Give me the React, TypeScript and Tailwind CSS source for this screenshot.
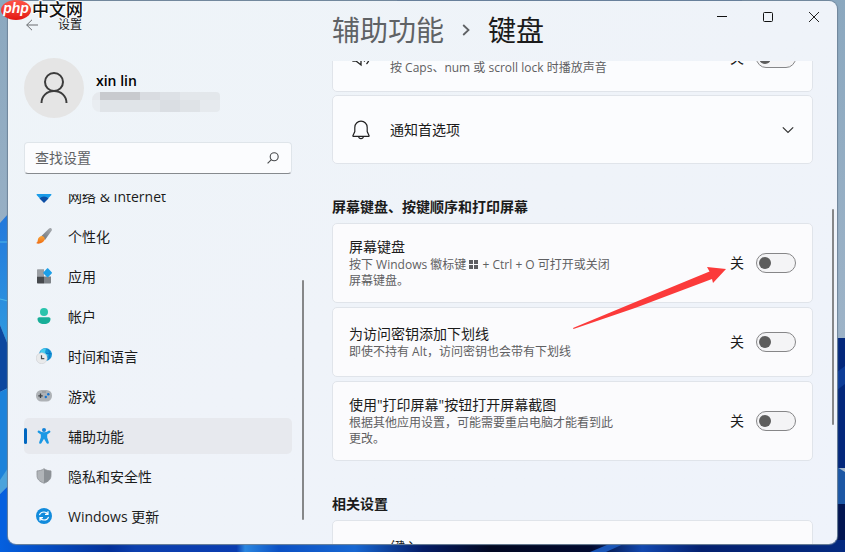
import { useState } from "react";
import type { ReactNode } from "react";

interface NavItem {
  id: string;
  label: string;
  icon: ReactNode;
}

interface ToggleProps {
  label: string;
}

interface OptionCardProps {
  title: string;
  description: ReactNode;
  children?: ReactNode;
}

const navItems: NavItem[] = [
  { id: "network", label: "网络 & Internet", icon: <NetworkIcon /> },
  { id: "personalization", label: "个性化", icon: <BrushIcon /> },
  { id: "apps", label: "应用", icon: <AppsIcon /> },
  { id: "accounts", label: "帐户", icon: <AccountIcon /> },
  { id: "time", label: "时间和语言", icon: <TimeIcon /> },
  { id: "gaming", label: "游戏", icon: <GameIcon /> },
  { id: "accessibility", label: "辅助功能", icon: <AccessibilityIcon /> },
  { id: "privacy", label: "隐私和安全性", icon: <ShieldIcon /> },
  { id: "update", label: "Windows 更新", icon: <UpdateIcon /> },
];

function NetworkIcon() {
  return (
    <svg viewBox="0 0 16 16" className="size-4">
      <path d="M0 5.5a11.5 11.5 0 0 1 16 0L12.8 9H3.2z" fill="#35c1f1" />
      <path d="M.4 6.800a10.800 10.800 0 0 1 15.200 0L11.600 11H4.400z" fill="#1b9be8" />
      <path d="M3.500 10.400a6.400 6.400 0 0 1 9 0L8 15z" fill="#0d4fa5" />
    </svg>
  );
}

function BrushIcon() {
  return (
    <svg viewBox="0 0 16 16" className="size-4">
      <defs>
        <linearGradient id="handle" x1="0" y1="1" x2="1" y2="0">
          <stop offset="0" stopColor="#6d7277" />
          <stop offset="1" stopColor="#a9adb2" />
        </linearGradient>
        <linearGradient id="tip" x1="0" y1="0" x2="0" y2="1">
          <stop offset="0" stopColor="#f9a53a" />
          <stop offset="1" stopColor="#ee6c12" />
        </linearGradient>
      </defs>
      <path d="M5.200 8.200 12.800.7c.8-.8 1.900-.9 2.600-.2.700.7.700 1.600 0 2.500L9 12z" fill="url(#handle)" />
      <path d="M4.600 8.300c1.100-.6 2.200-.3 3.100.5 1 .9 1.400 2 .8 3.300-.8 1.800-2.700 3.200-5 3.500-1.300.2-2.400 0-3.400-.5 1.300-.5 1.500-1.500 1.700-3 .2-1.800 1.200-3 2.800-3.800z" fill="url(#tip)" />
    </svg>
  );
}

function AppsIcon() {
  return (
    <svg viewBox="0 0 16 16" className="size-4">
      <path d="M1 2c0-.5.300-.700.700-.700H8V8.500H1z" fill="#9a9ea3" />
      <path d="M1 8.500h7V15.500H1.700c-.4 0-.7-.3-.7-.7z" fill="#46494d" />
      <path d="M8 8.500h7v6.300c0 .4-.3.700-.7.700H8z" fill="#7e8388" />
      <path d="M11 .6c.4-.4.8-.4 1.200 0l3.500 3.600c.4.4.4.800 0 1.200l-3.500 3.600c-.4.4-.8.4-1.200 0L7.500 5.400c-.4-.4-.4-.8 0-1.200z" fill="#1c9fe8" />
    </svg>
  );
}

function AccountIcon() {
  return (
    <svg viewBox="0 0 16 16" className="size-4">
      <circle cx="8" cy="4" r="4" fill="#29c4ac" />
      <path d="M1.500 11c0-1 .700-1.800 1.800-1.800h9.400c1.100 0 1.800.8 1.800 1.800 0 3-2.500 5-6.500 5s-6.500-2-6.500-5z" fill="#17ae98" />
    </svg>
  );
}

function TimeIcon() {
  return (
    <svg viewBox="0 0 16 16" className="size-4">
      <circle cx="9.500" cy="6.500" r="6.500" fill="#1795d6" />
      <path d="M4.500 3C6 1 8 .2 10 .2l-1 4.300 3 2.500-2 3-6-3z" fill="#48cdee" />
      <path d="M12 1.500c2 2.500 2.500 6.500.5 10M10 5.500h5.500" stroke="#0c78c6" strokeWidth="1" fill="none" />
      <circle cx="5.700" cy="10.200" r="5.500" fill="#e9eaeb" stroke="#c6c9cc" strokeWidth=".5" />
      <path d="M5.500 7.200v3.500h2.800" stroke="#4b4e52" strokeWidth="1.200" fill="none" />
    </svg>
  );
}

function GameIcon() {
  return (
    <svg viewBox="0 0 16 16" className="size-4">
      <rect x="0" y="2" width="16" height="11.500" rx="5.500" fill="#aeb2b6" />
      <path d="M2.300 7.800h4.400M4.500 5.600V10" stroke="#3f4347" strokeWidth="1.300" />
      <circle cx="12.300" cy="6.200" r="1.200" fill="#1673cf" />
      <circle cx="9.800" cy="9" r="1.200" fill="#1673cf" />
      <path d="M6.500 4h3" stroke="#666b70" strokeWidth="1" strokeDasharray="1 1" />
    </svg>
  );
}

function AccessibilityIcon() {
  return (
    <svg viewBox="0 0 16 16" className="size-4">
      <circle cx="8" cy="2" r="2" fill="#1583d8" />
      <path
        d="M1.700 3.200c.3-.7 1-.9 1.700-.5C6.500 4.800 9.500 4.800 12.600 2.700c.7-.4 1.400-.2 1.700.5.3.6 0 1.200-.6 1.600L11.200 6.400v3l1.600 4.800c.2.700-.1 1.300-.7 1.500-.7.2-1.300 0-1.600-.7L8 10.800 5.500 15c-.3.700-.9.9-1.600.7-.6-.2-.9-.8-.7-1.500l1.600-4.800v-3L2.300 4.800c-.6-.4-.9-1-.6-1.600z"
        fill="#1998e5"
      />
    </svg>
  );
}

function ShieldIcon() {
  return (
    <svg viewBox="0 0 16 16" className="size-4">
      <path d="M8 .7c2 1.500 4.300 2.100 7 2.200v4.600c0 3.700-2.600 6.200-7 7.700z" fill="#8b9095" />
      <path d="M8 .7C6 2.200 3.700 2.800 1 2.900v4.600c0 3.700 2.600 6.200 7 7.700z" fill="#b0b4b8" />
      <path d="M8 .7c2 1.500 4.300 2.100 7 2.200v4.600c0 3.700-2.600 6.200-7 7.700-4.400-1.500-7-4-7-7.700V2.900C3.700 2.800 6 2.200 8 .7z" fill="none" stroke="#8d9196" strokeWidth=".8" />
    </svg>
  );
}

function UpdateIcon() {
  return (
    <svg viewBox="0 0 16 16" className="size-4">
      <circle cx="8" cy="8" r="8" fill="#128bdc" />
      <path
        d="M3.500 7.200C4 5.200 5.700 4 8 4c1.600 0 2.900.7 3.700 1.900M12 3.300v3H9M12.500 8.800C12 10.800 10.300 12 8 12c-1.600 0-2.900-.7-3.700-1.900M4 12.700v-3h3"
        stroke="#fff"
        strokeWidth="1.200"
        fill="none"
      />
    </svg>
  );
}

function WindowsKey() {
  return (
    <svg viewBox="0 0 9 9" className="mr-px inline size-[9px] align-baseline" fill="#5d5d60" aria-label="Windows">
      <path d="M0 0h4v4H0zM5 0h4v4H5zM0 5h4v4H0zM5 5h4v4H5z" />
    </svg>
  );
}

// Desktop bloom that shows round the window edges
function Wallpaper() {
  return (
    <svg viewBox="0 0 845 552" preserveAspectRatio="none" className="absolute inset-0 -z-10 h-full w-full">
      <defs>
        <linearGradient id="sky" x1="0" y1="0" x2="0" y2="1">
          <stop offset="0" stopColor="#8ba8bf" />
          <stop offset="1" stopColor="#a9bacd" />
        </linearGradient>
        <linearGradient id="petal" x1="0" y1="0" x2="0" y2="1">
          <stop offset="0" stopColor="#2378dc" />
          <stop offset="1" stopColor="#2f9ae0" />
        </linearGradient>
        <linearGradient id="floor" x1="0" y1="0" x2="1" y2="0">
          <stop offset="0" stopColor="#0560df" />
          <stop offset=".13" stopColor="#03309a" />
          <stop offset=".16" stopColor="#0c3fae" />
          <stop offset=".28" stopColor="#0a3cb0" />
          <stop offset=".29" stopColor="#2a86e0" />
          <stop offset=".33" stopColor="#0b50c4" />
          <stop offset=".42" stopColor="#1767d2" />
          <stop offset=".5" stopColor="#051c66" />
          <stop offset=".58" stopColor="#020822" />
          <stop offset=".7" stopColor="#020a30" />
          <stop offset=".76" stopColor="#1248b0" />
          <stop offset=".83" stopColor="#04206f" />
          <stop offset="1" stopColor="#042a80" />
        </linearGradient>
      </defs>
      <rect width="845" height="552" fill="url(#sky)" />
      <path d="M397 0h345v4H397z" fill="#2d5fb0" />
      <path d="M0 223 8 214V345L0 325z" fill="url(#petal)" />
      <path d="M0 325 8 345V388L0 392z" fill="#0c479f" />
      <path d="M0 392 8 388V480H0z" fill="#1c82da" />
      <path d="M0 480 8 468V486L0 494z" fill="#4aa3dc" />
      <path d="M0 494 8 486V552H0z" fill="#0560df" />
      <path d="M0 299 8 301M0 242H8" stroke="#4fb9e8" strokeWidth="1" />
      <path d="M837 338h8v130h-8z" fill="#04287c" />
      <path d="M837 372 845 366V384L837 390z" fill="#0e3d98" />
      <path d="M837 467 845 472V504H837z" fill="#1d57a5" />
      <path d="M837 504h8v48h-8z" fill="#021552" />
      <path d="M0 540h845v12H0z" fill="url(#floor)" />
      <path d="M590 552l24-10h14l-22 10z" fill="#1a56b8" />
    </svg>
  );
}

function Watermark() {
  return (
    <div className="absolute top-0 left-px z-20 flex h-5 items-center gap-px">
      <span className="flex h-5 w-[30px] items-center justify-center rounded-[50%] bg-linear-to-b from-[#ff5348] to-[#e3120f] pb-1 font-['Liberation_Sans',sans-serif] text-[14px] leading-5 font-bold text-white italic">
        php
      </span>
      <span className="text-[17px] leading-5 font-medium text-[#111] [paint-order:stroke_fill] [-webkit-text-stroke:2px_white]">
        中文网
      </span>
    </div>
  );
}

function Toggle({ label }: ToggleProps) {
  const [on, setOn] = useState(false);

  return (
    <label className="flex shrink-0 items-center gap-3 text-[14px] leading-5">
      <span>{on ? "开" : "关"}</span>
      <input
        type="checkbox"
        role="switch"
        aria-label={label}
        checked={on}
        onChange={(e) => setOn(e.target.checked)}
        className="flex h-5 w-10 appearance-none items-center rounded-full border border-[#868688] bg-[#f4f4f6] px-[2px] before:size-3 before:rounded-full before:bg-[#5d5d5d] checked:justify-end checked:bg-[#0067c0] checked:before:bg-white"
      />
    </label>
  );
}

function OptionCard({ title, description, children }: OptionCardProps) {
  return (
    <div className="relative flex min-h-[70px] items-center justify-between rounded-[5px] border border-[#e0e4ea] bg-[#fbfbfd] px-4 py-[13px]">
      <div className="max-w-[270px]">
        <h3 className="text-[14px] leading-5">{title}</h3>
        <p className="text-[12px] leading-4 text-[#5f5f62]">{description}</p>
      </div>
      <Toggle label={title} />
      {children}
    </div>
  );
}

function Sidebar() {
  const [active, setActive] = useState("accessibility");

  return (
    <aside className="flex w-[296px] shrink-0 flex-col pl-4">
      <div className="flex h-12 items-center gap-5">
        <button aria-label="返回" className="pl-[2px]">
          <svg viewBox="0 0 12 12" className="size-3" fill="none" stroke="#6b6d70" strokeWidth="1">
            <path d="M12 6H.7M6 .8.7 6 6 11.200" />
          </svg>
        </button>
        <span className="text-[12px] leading-4">设置</span>
      </div>

      <div className="mt-[9px] flex items-center gap-2">
        <div className="flex size-[60px] items-center justify-center rounded-full bg-[#e5e5e5]">
          <svg viewBox="0 0 28 32" className="h-8 w-7" fill="none" stroke="#3c3c3c" strokeWidth="2">
            <circle cx="14" cy="10" r="9" />
            <path d="M1.500 31C1.500 24 7 19 14 19s12.500 5 12.500 12" />
          </svg>
        </div>
        <div className="mt-[6px]">
          <p className="pl-1 text-[14px] leading-5 font-semibold text-black">xin lin</p>
          {/* hidden mail address */}
          <div className="mt-px flex h-5 w-32 flex-col overflow-hidden rounded-[4px] rounded-l-lg">
            <div className="flex h-2">
              <span className="w-2 bg-[#e6e9ed]" />
              <span className="w-10 bg-[#c8cace]" />
              <span className="w-5 bg-[#d9dce1]" />
              <span className="w-5 bg-[#dde1e6]" />
              <span className="flex-1 bg-[#e3e7eb]" />
            </div>
            <div className="flex h-3">
              <span className="w-2 bg-[#e9edf1]" />
              <span className="w-15 bg-[#e0e4e8]" />
              <span className="w-5 bg-[#dadee3]" />
              <span className="w-5 bg-[#dfe3e7]" />
              <span className="flex-1 bg-[#e6eaee]" />
            </div>
          </div>
        </div>
      </div>

      <label className="mt-6 mr-3 flex h-8 shrink-0 items-center rounded-[4px] border border-b-[#868a8e] border-[#dfe5ea] bg-[#fbfcfe] px-[10px]">
        <input
          type="text"
          placeholder="查找设置"
          aria-label="查找设置"
          className="min-w-0 flex-1 bg-transparent text-[14px] leading-5 outline-none placeholder:text-[#606265]"
        />
        <svg viewBox="0 0 12 12" className="mr-[2px] size-3" fill="none" stroke="#47494c" strokeWidth="1.100">
          <circle cx="7.200" cy="4.800" r="4" />
          <path d="M4.400 7.600.6 11.400" />
        </svg>
      </label>

      <div className="mt-5 flex min-h-0 flex-1 overflow-hidden">
        <nav className="-mt-4 mr-[10px] w-[268px]">
          {navItems.map((item) => (
            <button
              key={item.id}
              onClick={() => setActive(item.id)}
              className={
                item.id === active
                  ? "mb-1 flex h-9 w-full items-center rounded-[5px] bg-[#e7e9ee]"
                  : "mb-1 flex h-9 w-full items-center rounded-[5px] hover:bg-[#e7e9ee]"
              }
            >
              <span className={item.id === active ? "h-4 w-[3px] rounded-full bg-[#0067c0]" : "w-[3px]"} />
              <span className="mr-4 ml-[9px]">{item.icon}</span>
              <span className="pt-[2px] text-[14px] leading-5">{item.label}</span>
            </button>
          ))}
        </nav>
        <div className="mt-[86px] h-60 w-[2px] shrink-0 rounded-full bg-[#868789]" />
      </div>
    </aside>
  );
}

function WindowControls() {
  return (
    <div className="flex h-8">
      <button aria-label="最小化" className="flex w-[46px] items-center justify-center">
        <svg viewBox="0 0 10 10" className="size-[10px]" stroke="#111">
          <path d="M0 4.500h10" />
        </svg>
      </button>
      <button aria-label="最大化" className="flex w-[46px] items-center justify-center">
        <svg viewBox="0 0 10 10" className="size-[10px]" fill="none" stroke="#111">
          <rect x=".5" y=".5" width="9" height="9" rx="1" />
        </svg>
      </button>
      <button aria-label="关闭" className="flex w-[46px] items-center justify-center">
        <svg viewBox="0 0 10 10" className="size-[10px]" stroke="#222">
          <path d="M0 0l10 10M10 0 0 10" />
        </svg>
      </button>
    </div>
  );
}

export default function App() {
  return (
    <div className="relative isolate h-screen px-2 pt-px pb-2 font-['Open_Sans','Noto_Sans_CJK_SC',sans-serif] text-[#1b1b1b]">
      <Wallpaper />
      <Watermark />

      <div className="flex h-full overflow-hidden rounded-lg bg-linear-to-br from-[#eef4f8] via-[#eff3f9] to-[#eff3fb] shadow-[0_0_1px_1px_#6f849a]">
        <Sidebar />

        <main className="ml-7 flex min-w-0 flex-1 flex-col">
          <header className="flex h-[60px] shrink-0 justify-between">
            <h1 className="flex h-[58px] items-center gap-[18px] text-[28px] leading-9">
              <a href="#accessibility" className="text-[#5f6265]">
                辅助功能
              </a>
              <svg viewBox="0 0 8 12" className="h-3 w-2" fill="none" stroke="#5f6265" strokeWidth="1.800">
                <path d="M1.200 1 6.500 6 1.200 11" />
              </svg>
              <span>键盘</span>
            </h1>
            <WindowControls />
          </header>

          <div className="flex min-h-0 flex-1 overflow-hidden">
            <div className="-mt-[38px] min-w-0 flex-1">
              <div className="mb-[3px] flex h-[69px] items-center rounded-[5px] border border-[#e0e4ea] bg-[#fbfcfe] px-4">
                <svg viewBox="0 0 20 20" className="ml-[2px] size-5" fill="none" stroke="#222" strokeWidth="1.300">
                  <path d="M2 7h3l5-4v14l-5-4H2zM13 6.500c2 2 2 5 0 7M15.500 4c3.500 3.500 3.500 8.500 0 12" />
                </svg>
                <p className="ml-[19px] flex-1 pt-5 text-[12px] leading-4 text-[#5f5f62]">
                  按 Caps、num 或 scroll lock 时播放声音
                </p>
                <Toggle label="切换键" />
              </div>

              <button className="flex h-[69px] w-full items-center rounded-[5px] border border-[#e0e4ea] bg-[#fbfcfe] px-4">
                <svg viewBox="0 0 20 20" className="ml-[2px] size-5" fill="none" stroke="#222" strokeWidth="1.200">
                  <path d="M10 1.200c-3.500 0-6.200 2.700-6.200 6.200v4.200l-1.900 4.100c-.1.300 0 .6.400.6h15.400c.4 0 .5-.3.400-.6l-1.900-4.100V7.400c0-3.500-2.700-6.200-6.200-6.200z" />
                  <path d="M7.600 16.500c.2 1.300 1.100 2.200 2.400 2.200s2.200-.9 2.400-2.200" />
                </svg>
                <span className="ml-[19px] flex-1 text-left text-[14px] leading-5">通知首选项</span>
                <svg viewBox="0 0 12 12" className="mr-[2px] size-3" fill="none" stroke="#333" strokeWidth="1.200">
                  <path d="M.8 3.300 6 8.500l5.200-5.200" />
                </svg>
              </button>

              <h2 className="mt-[33px] mb-[6px] text-[14px] leading-5 font-bold">屏幕键盘、按键顺序和打印屏幕</h2>

              <div className="flex flex-col gap-1">
                <OptionCard
                  title="屏幕键盘"
                  description={
                    <>
                      按下 Windows 徽标键 <WindowsKey /> + Ctrl + O 可打开或关闭屏幕键盘。
                    </>
                  }
                >
                  {/* red pointer to the switch */}
                  <svg viewBox="0 0 154 62" className="absolute top-[43px] right-[85px] z-10 h-[62px] w-[154px]" fill="#fb3a3a">
                    <path d="M153 2 134 0l2.500 4.500L60 36 0 61l.5 1L62 41l77-29 1 4z" />
                  </svg>
                </OptionCard>
                <OptionCard title="为访问密钥添加下划线" description="即使不持有 Alt，访问密钥也会带有下划线" />
                <OptionCard
                  title={'使用"打印屏幕"按钮打开屏幕截图'}
                  description="根据其他应用设置，可能需要重启电脑才能看到此更改。"
                />
              </div>

              <h2 className="mt-[33px] mb-[6px] text-[14px] leading-5 font-bold">相关设置</h2>

              <a
                href="#typing"
                className="flex h-[69px] items-start rounded-[5px] border border-[#e0e4ea] bg-[#fbfbfd] pt-4 pl-[58px] text-[14px] leading-5"
              >
                键入
              </a>
            </div>
            <div className="mt-[148px] mr-[3px] ml-[19px] h-[216px] w-[2px] shrink-0 rounded-full bg-[#868789]" />
          </div>
        </main>
      </div>
    </div>
  );
}
